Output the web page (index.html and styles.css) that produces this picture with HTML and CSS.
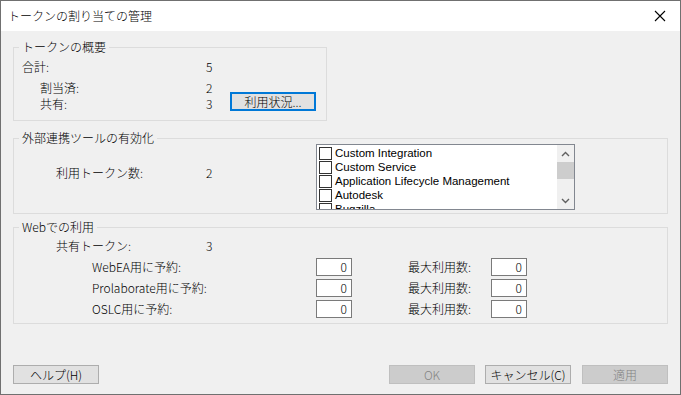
FILE: index.html
```html
<!DOCTYPE html>
<html lang="ja">
<head>
    <meta charset="UTF-8">
    <title>トークンの割り当ての管理</title>
    <link rel="stylesheet" href="styles.css">
</head>
<body>

<div class="window">
    <!-- Title bar -->
    <div class="titlebar">
        <span class="title">トークンの割り当ての管理</span>
        <svg class="close" width="12" height="12" viewBox="0 0 12 12">
            <path d="M1 1 L11 11 M11 1 L1 11" stroke="#000" stroke-width="1.1" fill="none"/>
        </svg>
    </div>

    <div class="content">
        <!-- Summary -->
        <div class="group g-summary">
            <div class="group-title">トークンの概要</div>
            <div class="summary">
                <span class="lbl r1">合計:</span><span class="val r1">5</span>
                <span class="lbl sub r2">割当済:</span><span class="val r2">2</span>
                <span class="lbl sub r3">共有:</span><span class="val r3">3</span>
                <button class="btn focused usage">利用状況...</button>
            </div>
        </div>

        <!-- External tools -->
        <div class="group g-tools">
            <div class="group-title">外部連携ツールの有効化</div>
            <div class="tools-row">
                <div class="tools-left">
                    <span class="lbl lbl-wide">利用トークン数:</span><span class="val">2</span>
                </div>
                <div class="listbox">
                    <ul class="items">
                        <li><span class="check"></span>Custom Integration</li>
                        <li><span class="check"></span>Custom Service</li>
                        <li><span class="check"></span>Application Lifecycle Management</li>
                        <li><span class="check"></span>Autodesk</li>
                        <li><span class="check"></span>Bugzilla</li>
                    </ul>
                    <div class="scrollbar">
                        <div class="arrow">
                            <svg width="9" height="6" viewBox="0 0 9 6"><path d="M1 5 L4.5 1.5 L8 5" stroke="#606060" stroke-width="1.4" fill="none"/></svg>
                        </div>
                        <div class="track"><div class="thumb"></div></div>
                        <div class="arrow">
                            <svg width="9" height="6" viewBox="0 0 9 6"><path d="M1 1 L4.5 4.5 L8 1" stroke="#606060" stroke-width="1.4" fill="none"/></svg>
                        </div>
                    </div>
                </div>
            </div>
        </div>

        <!-- Web -->
        <div class="group g-web">
            <div class="group-title">Webでの利用</div>
            <div class="shared-row">
                <span class="lbl lbl-wide">共有トークン:</span><span class="val">3</span>
            </div>
            <div class="reserve-row">
                <span class="res-lbl">WebEA用に予約:</span>
                <span class="num">0</span>
                <span class="max-lbl">最大利用数:</span>
                <span class="num">0</span>
            </div>
            <div class="reserve-row">
                <span class="res-lbl">Prolaborate用に予約:</span>
                <span class="num">0</span>
                <span class="max-lbl">最大利用数:</span>
                <span class="num">0</span>
            </div>
            <div class="reserve-row">
                <span class="res-lbl">OSLC用に予約:</span>
                <span class="num">0</span>
                <span class="max-lbl">最大利用数:</span>
                <span class="num">0</span>
            </div>
        </div>

        <!-- Buttons -->
        <div class="buttons">
            <button class="btn">ヘルプ(H)</button>
            <div class="spacer"></div>
            <button class="btn" disabled>OK</button>
            <button class="btn">キャンセル(C)</button>
            <button class="btn" disabled>適用</button>
        </div>
    </div>
</div>

</body>
</html>
```

FILE: styles.css
```css
* {
    box-sizing: border-box;
    margin: 0;
    padding: 0;
}
body {
    font-family: "Noto Sans CJK JP", "Noto Sans", sans-serif;
    font-size: 12px;
    font-weight: 300;
    line-height: 16px;
    color: #000;
    background-color: #fff;
}
.window {
    width: 681px;
    height: 395px;
    border: 1px solid #707070;
    background-color: #f0f0f0;
    display: flex;
    flex-direction: column;
}
.titlebar {
    height: 30px;
    background-color: #fff;
    display: flex;
    align-items: center;
    padding: 0 8px 0 7px;
}
.title {
    flex-grow: 1;
    font-size: 12px;
}
.close {
    margin-right: 6px;
}
.content {
    flex-grow: 1;
    display: flex;
    flex-direction: column;
    padding: 16px 12px 10px 12px;
}
.group {
    border: 1px solid #dcdcdc;
}
.group-title {
    width: fit-content;
    margin: -9px 0 0 5px;
    padding: 0 3px;
    height: 16px;
    background-color: #f0f0f0;
}
.lbl, .val {
    white-space: nowrap;
}

/* summary */
.g-summary {
    width: 314px;
    padding-bottom: 8px;
}
.summary {
    display: grid;
    grid-template-columns: 184px 24px 86px;
    grid-template-rows: 16px 5px 16px 16px;
    padding-left: 8px;
    margin-top: 4px;
}
.summary .lbl { grid-column: 1; }
.summary .val { grid-column: 2; }
.summary .r1 { grid-row: 1; }
.summary .r2 { grid-row: 3; }
.summary .r3 { grid-row: 4; }
.summary .sub {
    padding-left: 18px;
}
.usage {
    grid-column: 3;
    grid-row: 3 / 5;
    align-self: end;
    margin-bottom: 1px;
}

/* tools */
.g-tools {
    margin-top: 17px;
    padding-bottom: 3px;
}
.tools-row {
    display: flex;
    margin-top: -2px;
}
.tools-left {
    width: 302px;
    padding-left: 42px;
    padding-top: 21px;
    display: flex;
}
.lbl-wide {
    width: 150px;
}
.listbox {
    width: 259px;
    height: 66px;
    border: 1px solid #828790;
    background-color: #fff;
    display: flex;
    overflow: hidden;
}
.items {
    list-style: none;
    flex-grow: 1;
    padding: 1px 0 0 2px;
    font-family: "Liberation Sans", "Noto Sans CJK JP", sans-serif;
    font-size: 11.5px;
    font-weight: 400;
}
.items li {
    height: 14px;
    line-height: 14px;
    display: flex;
    align-items: center;
    white-space: nowrap;
}
.check {
    width: 13px;
    height: 13px;
    border: 1px solid #333;
    background-color: #fff;
    margin-right: 3px;
    flex-shrink: 0;
}
.scrollbar {
    width: 17px;
    background-color: #f0f0f0;
    display: flex;
    flex-direction: column;
}
.arrow {
    height: 17px;
    display: flex;
    align-items: center;
    justify-content: center;
}
.track {
    flex-grow: 1;
}
.thumb {
    height: 17px;
    background-color: #cdcdcd;
}

/* web */
.g-web {
    margin-top: 13px;
    padding-bottom: 5px;
}
.shared-row {
    display: flex;
    padding-left: 42px;
    margin-top: 3px;
    height: 16px;
}
.reserve-row {
    display: flex;
    align-items: center;
    height: 18px;
    margin-top: 3px;
}
.shared-row + .reserve-row {
    margin-top: 4px;
}
.res-lbl {
    width: 302px;
    padding-left: 78px;
    white-space: nowrap;
}
.max-lbl {
    width: 139px;
    padding-left: 56px;
    white-space: nowrap;
}
.num {
    width: 36px;
    height: 18px;
    border: 1px solid #7a7a7a;
    background-color: #fff;
    text-align: right;
    padding-right: 4px;
    line-height: 16px;
}

/* buttons */
.buttons {
    margin-top: auto;
    display: flex;
    gap: 10px;
}
.spacer {
    flex-grow: 1;
}
.btn {
    width: 86px;
    height: 19px;
    font-family: inherit;
    font-size: 12px;
    font-weight: 300;
    line-height: 16px;
    color: #000;
    background-color: #e1e1e1;
    border: 1px solid #adadad;
}
.btn.focused {
    border: 2px solid #0078d7;
}
.btn:disabled {
    color: #838383;
    background-color: #cccccc;
    border-color: #bfbfbf;
}
.buttons .btn:last-child {
    margin-left: 1px;
}
```
